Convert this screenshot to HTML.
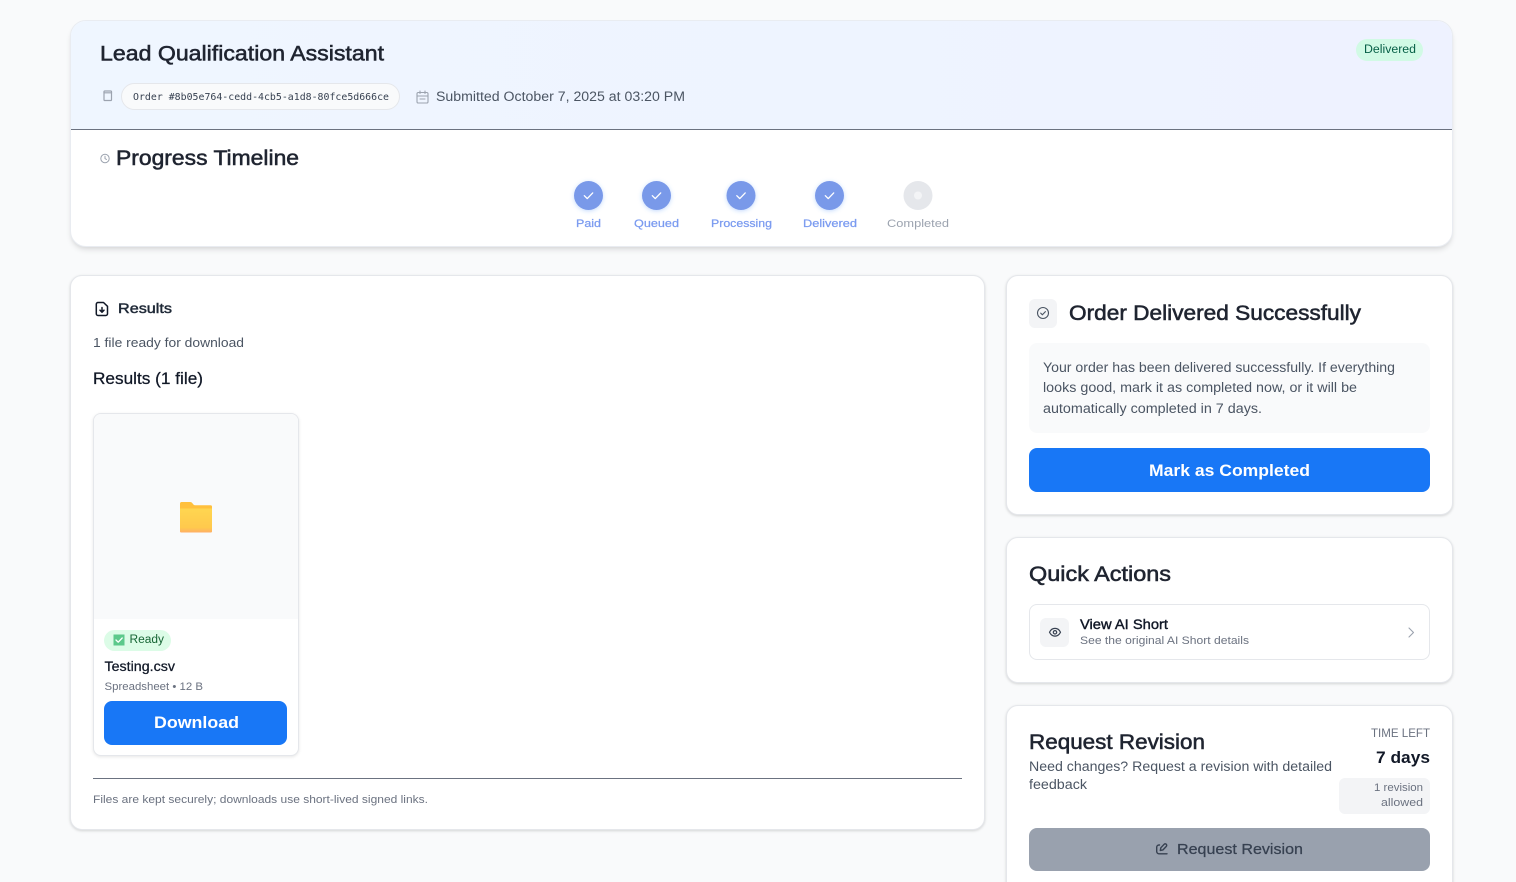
<!DOCTYPE html>
<html lang="en"><head><meta charset="utf-8"><title>Lead Qualification Assistant</title>
<style>
html,body{margin:0;padding:0;background:#f9fafb;width:1516px;height:882px;overflow:hidden;font-family:"Liberation Sans",sans-serif}
#p{position:relative;width:1516px;height:882px;overflow:hidden;background:#f9fafb}
.b{position:absolute;box-sizing:border-box}
.card{background:#fff;border:1px solid #e5e7eb;border-radius:12px;box-shadow:0 1px 3px rgba(0,0,0,.1),0 1px 2px rgba(0,0,0,.06)}
svg{position:absolute;left:0;top:0}
text{font-family:"Liberation Sans",sans-serif;font-size:13.5px;fill:#4b5563;white-space:pre}
.h{font-size:21px;fill:#1f2430;stroke:#1f2430;stroke-width:.55px}
.m{stroke-width:.25px}
.s{font-size:11px;fill:#6b7280}
.w{font-size:16.5px;font-weight:700;fill:#fff}
.ic{fill:none;stroke-linecap:round;stroke-linejoin:round}
</style></head><body><div id="p">
<div class="b" style="left:70px;top:20px;width:1383px;height:227px;background:#fff;border:1px solid #e9ecf1;border-radius:16px;box-shadow:0 4px 6px -1px rgba(0,0,0,.1),0 2px 4px -2px rgba(0,0,0,.08);overflow:hidden">
<div class="b" style="left:0;top:0;width:100%;height:109px;background:linear-gradient(90deg,#eff6ff,#eef2ff);border-bottom:1px solid #6b7280"></div></div>
<div class="b" style="left:1356px;top:39px;width:67px;height:22px;border-radius:11px;background:#d1fae5"></div>
<div class="b" style="left:121px;top:83px;width:279px;height:27px;border-radius:14px;background:#f9fafb;border:1px solid #e5e7eb"></div>

<div class="b card" style="left:70px;top:275px;width:915px;height:555px"></div>
<div class="b" style="left:93px;top:413px;width:206px;height:343px;background:#fff;border:1px solid #e5e7eb;border-radius:8px;box-shadow:0 1px 3px rgba(0,0,0,.1);overflow:hidden"><div style="height:205px;background:#f9fafb"></div></div>
<div class="b" style="left:104px;top:630px;width:67px;height:21px;border-radius:11px;background:#dcfce7"></div>
<div class="b" style="left:104px;top:701px;width:183px;height:44px;border-radius:8px;background:#1877f6"></div>
<div class="b" style="left:93px;top:778px;width:869px;height:1px;background:#6b7280"></div>

<div class="b card" style="left:1006px;top:275px;width:447px;height:240px"></div>
<div class="b" style="left:1029px;top:299px;width:28px;height:29px;border-radius:6px;background:#f3f4f6"></div>
<div class="b" style="left:1029px;top:343px;width:401px;height:90px;border-radius:8px;background:#f9fafb"></div>
<div class="b" style="left:1029px;top:448px;width:401px;height:44px;border-radius:8px;background:#1877f6"></div>

<div class="b card" style="left:1006px;top:537px;width:447px;height:146px"></div>
<div class="b" style="left:1029px;top:604px;width:401px;height:56px;border-radius:8px;background:#fff;border:1px solid #e5e7eb"></div>
<div class="b" style="left:1040px;top:618px;width:29px;height:29px;border-radius:6px;background:#f3f4f6"></div>

<div class="b card" style="left:1006px;top:705px;width:447px;height:220px"></div>
<div class="b" style="left:1339px;top:778px;width:91px;height:36px;border-radius:6px;background:#f3f4f6"></div>
<div class="b" style="left:1029px;top:828px;width:401px;height:43px;border-radius:8px;background:#99a1ae"></div>

<svg width="1516" height="882" viewBox="0 0 1516 882">
<defs>
<linearGradient id="fb" x1="0" y1="0" x2="0" y2="1"><stop offset="0" stop-color="#ffd650"/><stop offset=".8" stop-color="#ffc94d"/><stop offset="1" stop-color="#ffae66"/></linearGradient>
<filter id="gl" x="-40%" y="-40%" width="180%" height="180%"><feDropShadow dx="0" dy="1" stdDeviation="2" flood-color="#3b82f6" flood-opacity=".3"/></filter>
</defs>
<text class="h" x="100" y="60.500" textLength="284" lengthAdjust="spacingAndGlyphs">Lead Qualification Assistant</text>
<text x="1364" y="53" textLength="52" lengthAdjust="spacingAndGlyphs" style="font-size:11.5px;fill:#065f46">Delivered</text>
<g class="ic" stroke="#9ca3af" stroke-width="1.2"><rect x="104" y="91" width="7.5" height="9.5" rx=".8"/><path d="M104 92.800h7.500"/></g>
<text x="133" y="100" textLength="256" lengthAdjust="spacingAndGlyphs" style="font-family:'DejaVu Sans Mono',monospace;font-size:10px;fill:#374151">Order #8b05e764-cedd-4cb5-a1d8-80fce5d666ce</text>
<g class="ic" stroke="#9ca3af" stroke-width="1.1"><rect x="417" y="92.500" width="11" height="10.500" rx="1.300"/><path d="M417 96h11M420 91v2.500M425 91v2.500M420 99h5"/></g>
<text x="436" y="101" textLength="249" lengthAdjust="spacingAndGlyphs">Submitted October 7, 2025 at 03:20 PM</text>

<g class="ic" stroke="#9ca3af" stroke-width="1"><circle cx="105" cy="158.500" r="4.200"/><path d="M105 156.300v2.300l1.500.9"/></g>
<text class="h" x="116" y="165" textLength="183" lengthAdjust="spacingAndGlyphs">Progress Timeline</text>

<g filter="url(#gl)" fill="#7999e9"><circle cx="588.500" cy="195.500" r="14.500"/><circle cx="656.500" cy="195.500" r="14.500"/><circle cx="741" cy="195.500" r="14.500"/><circle cx="829.500" cy="195.500" r="14.500"/></g>
<circle cx="918" cy="195.500" r="14.500" fill="#e5e7eb"/><circle cx="918" cy="195.500" r="4" fill="#f3f4f6"/>
<g class="ic" stroke="#fff" stroke-width="1.300"><path d="M584.300 195.700l3 2.900 5.400-5.700"/><path d="M652.300 195.700l3 2.900 5.400-5.700"/><path d="M736.800 195.700l3 2.900 5.400-5.700"/><path d="M825.300 195.700l3 2.900 5.400-5.700"/></g>
<text class="m" x="576" y="227" textLength="25" lengthAdjust="spacingAndGlyphs" style="font-size:11px;fill:#7b9bf0;stroke:#7b9bf0">Paid</text>
<text class="m" x="634" y="227" textLength="45" lengthAdjust="spacingAndGlyphs" style="font-size:11px;fill:#7b9bf0;stroke:#7b9bf0">Queued</text>
<text class="m" x="711" y="227" textLength="61" lengthAdjust="spacingAndGlyphs" style="font-size:11px;fill:#7b9bf0;stroke:#7b9bf0">Processing</text>
<text class="m" x="803" y="227" textLength="54" lengthAdjust="spacingAndGlyphs" style="font-size:11px;fill:#7b9bf0;stroke:#7b9bf0">Delivered</text>
<text x="887" y="227" textLength="62" lengthAdjust="spacingAndGlyphs" style="font-size:11px;fill:#9ca3af">Completed</text>

<g class="ic" stroke="#111827" stroke-width="1.500"><path d="M103.500 302.500h-5.500a1.700 1.700 0 0 0-1.700 1.700v9.600a1.700 1.700 0 0 0 1.700 1.700h7.800a1.700 1.700 0 0 0 1.700-1.700v-7.500z"/><path d="M102 307.500v4.500M100 310.200l2 2 2-2"/></g>
<text class="m" x="118" y="313" textLength="54" lengthAdjust="spacingAndGlyphs" style="fill:#1f2937;stroke:#1f2937;stroke-width:.45px">Results</text>
<text x="93" y="347" textLength="151" lengthAdjust="spacingAndGlyphs" style="font-size:13px">1 file ready for download</text>
<text class="m" x="93" y="384" textLength="110" lengthAdjust="spacingAndGlyphs" style="font-size:16.5px;fill:#111827;stroke:#111827">Results (1 file)</text>

<path d="M181.500 502h8.500c1.500 0 2 .7 3 2 .6.800 1 1.200 2 1.200h15.500c1 0 1.500.6 1.500 1.500v24c0 1-.6 1.500-1.500 1.500h-29c-1 0-1.500-.6-1.500-1.500v-27c0-1 .6-1.700 1.500-1.700z" fill="#ffc03d"/>
<path d="M180 508.500h32v22.700c0 .9-.6 1.300-1.500 1.300h-29c-.9 0-1.500-.4-1.500-1.300z" fill="url(#fb)"/>

<rect x="113.500" y="634.500" width="11" height="11" fill="#5cc98b"/>
<path class="ic" stroke="#fff" stroke-width="1.300" d="M116 640l2.200 2.200 4-4.200"/>
<text x="129.500" y="643" textLength="34.500" lengthAdjust="spacingAndGlyphs" style="font-size:11.5px;fill:#166534">Ready</text>
<text class="m" x="104.500" y="671" textLength="70.500" lengthAdjust="spacingAndGlyphs" style="fill:#111827;stroke:#111827">Testing.csv</text>
<text class="s" x="104.500" y="690" textLength="98.500" lengthAdjust="spacingAndGlyphs">Spreadsheet • 12 B</text>
<text class="w" x="154" y="728" textLength="85" lengthAdjust="spacingAndGlyphs">Download</text>
<text class="s" x="93" y="803" textLength="335" lengthAdjust="spacingAndGlyphs">Files are kept securely; downloads use short-lived signed links.</text>

<g class="ic" stroke="#4b5563" stroke-width="1.100"><circle cx="1043" cy="313" r="5.500"/><path d="M1040.700 313.100l1.700 1.700 3-3.200"/></g>
<text class="h" x="1069" y="320" textLength="292" lengthAdjust="spacingAndGlyphs">Order Delivered Successfully</text>
<text x="1043" y="372" textLength="352" lengthAdjust="spacingAndGlyphs">Your order has been delivered successfully. If everything</text>
<text x="1043" y="392" textLength="314" lengthAdjust="spacingAndGlyphs">looks good, mark it as completed now, or it will be</text>
<text x="1043" y="413" textLength="219" lengthAdjust="spacingAndGlyphs">automatically completed in 7 days.</text>
<text class="w" x="1149" y="476" textLength="161" lengthAdjust="spacingAndGlyphs">Mark as Completed</text>

<text class="h" x="1029" y="581" textLength="142" lengthAdjust="spacingAndGlyphs">Quick Actions</text>
<g class="ic" stroke="#374151" stroke-width="1.200"><path d="M1049.500 632.300c1.200-2.600 3.200-3.900 5.500-3.900s4.300 1.300 5.500 3.900c-1.200 2.500-3.200 3.800-5.500 3.800s-4.300-1.300-5.500-3.800z"/><circle cx="1055" cy="632.300" r="1.700"/></g>
<text class="m" x="1080" y="629" textLength="88" lengthAdjust="spacingAndGlyphs" style="fill:#111827;stroke:#111827;stroke-width:.4px">View AI Short</text>
<text class="s" x="1080" y="644" textLength="169" lengthAdjust="spacingAndGlyphs">See the original AI Short details</text>
<path class="ic" stroke="#9ca3af" stroke-width="1.100" d="M1409 628l4.500 4.500-4.500 4.500"/>

<text class="h" x="1029" y="749" textLength="176" lengthAdjust="spacingAndGlyphs">Request Revision</text>
<text x="1029" y="771" textLength="303" lengthAdjust="spacingAndGlyphs">Need changes? Request a revision with detailed</text>
<text x="1029" y="789" textLength="58" lengthAdjust="spacingAndGlyphs">feedback</text>
<text x="1371" y="737" textLength="59" lengthAdjust="spacingAndGlyphs" style="font-size:11.5px;fill:#6b7280">TIME LEFT</text>
<text x="1376" y="763" textLength="54" lengthAdjust="spacingAndGlyphs" style="font-size:16.5px;font-weight:700;fill:#111827">7 days</text>
<text class="s" x="1374" y="791" textLength="49" lengthAdjust="spacingAndGlyphs">1 revision</text>
<text class="s" x="1381" y="806" textLength="42" lengthAdjust="spacingAndGlyphs">allowed</text>
<g class="ic" stroke="#374151" stroke-width="1.400"><path d="M1159.500 845h-.5a2.300 2.300 0 0 0-2.300 2.300v4.200a2.300 2.300 0 0 0 2.300 2.300h8"/><path d="M1160.300 850.500l.5-2.700 3.300-3.500a1.500 1.500 0 0 1 2.200 2.100l-3.300 3.500z"/></g>
<text class="m" x="1177" y="854" textLength="126" lengthAdjust="spacingAndGlyphs" style="font-size:14.500px;fill:#374151;stroke:#374151">Request Revision</text>
</svg>
</div></body></html>
